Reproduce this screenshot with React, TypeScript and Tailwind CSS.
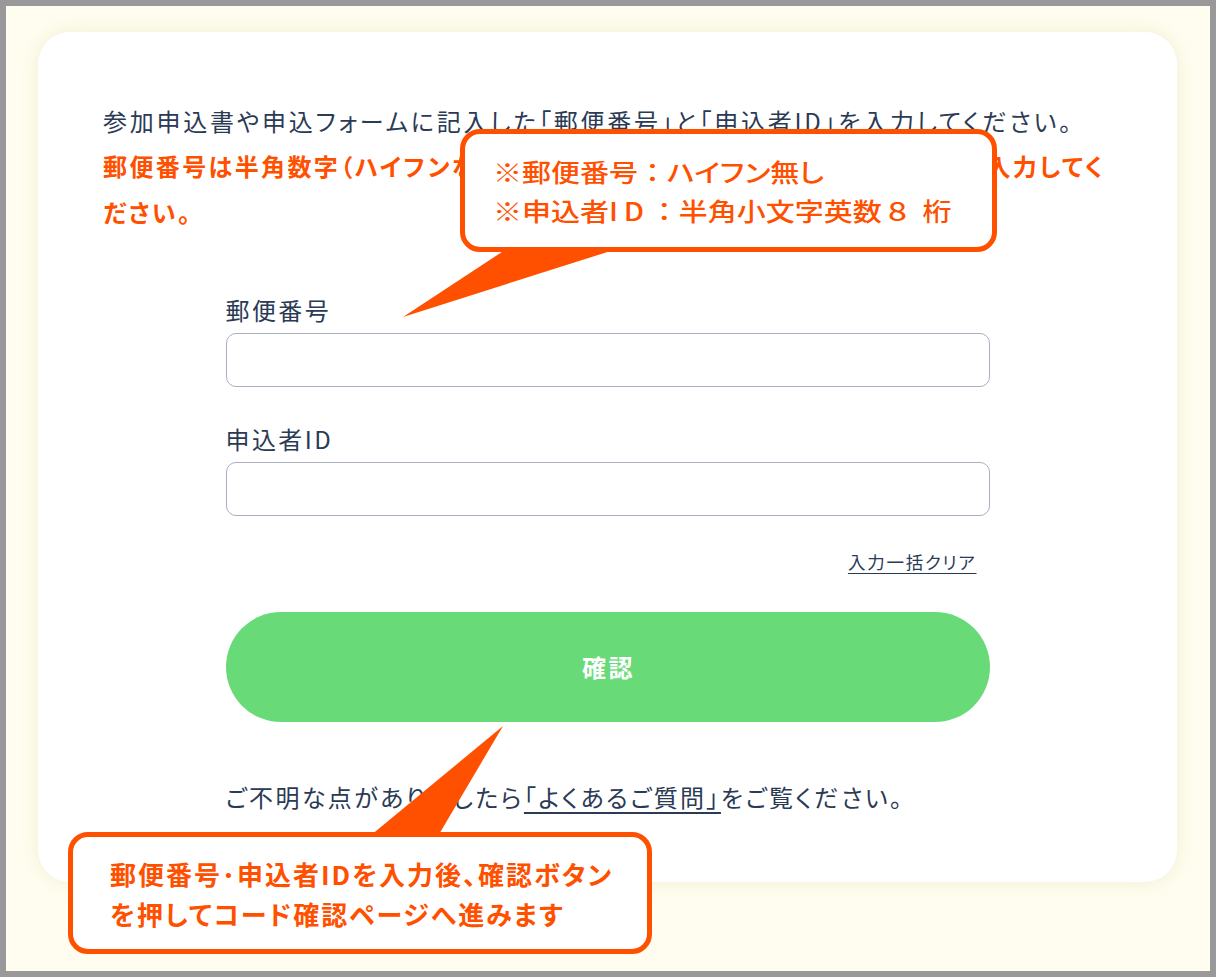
import React from "react";

const font = { fontFamily: '"Noto Sans CJK JP", "Noto Sans", sans-serif' };

const Colon = () => <span className="[font-feature-settings:normal]">：</span>;

export default function App() {
    return (
        <div className="relative w-[1216px] h-[977px] bg-[#999999] p-[6px]" style={font}>
            <div className="w-full h-full bg-[#fffdef] pt-[26px] pl-[32px]">
                <div className="w-[1139px] bg-white rounded-[32px] shadow-[0_0_18px_rgba(190,180,120,0.22)] px-[65px] pt-[66px] pb-[68px] text-[#2b3a55] [font-feature-settings:'palt']">
                    <p className="text-[24px] leading-[45px] tracking-[0.115em] whitespace-nowrap">
                        参加申込書や申込フォームに記入した「郵便番号」と「申込者ID」を入力してください。
                    </p>
                    <p className="text-[24px] leading-[46px] tracking-[0.1em] font-bold text-[#ff5000]">
                        <span className="block whitespace-nowrap">
                            郵便番号は半角数字（ハイフンなし）7桁、申込者IDは半角小文字英数字8桁で入力してく
                        </span>
                        <span className="block">ださい。</span>
                    </p>

                    <form className="w-[764px] mx-auto mt-[58px]">
                        <label className="block text-[24px] leading-[34px] tracking-[0.1em] mb-[6px]">郵便番号</label>
                        <input className="block w-full h-[54px] rounded-[10px] border border-[#a9b0bf] bg-white px-4 outline-none" />

                        <label className="block text-[24px] leading-[34px] tracking-[0.1em] mt-[35px] mb-[6px]">申込者ID</label>
                        <input className="block w-full h-[54px] rounded-[10px] border border-[#a9b0bf] bg-white px-4 outline-none" />

                        <div className="flex justify-end pr-[13px] mt-[34px]">
                            <a className="text-[17.5px] leading-[24px] tracking-[0.1em] underline underline-offset-[4px] cursor-pointer">
                                入力一括クリア
                            </a>
                        </div>

                        <button
                            type="button"
                            className="block w-full h-[110px] mt-[38px] rounded-full bg-[#68db78] text-white text-[24px] font-bold tracking-[0.1em] pl-[2px]"
                        >
                            確認
                        </button>

                        <p className="mt-[58px] text-[24px] leading-[34px] tracking-[0.1em] whitespace-nowrap">
                            ご不明な点がありましたら
                            <a className="underline underline-offset-[5px] decoration-2 cursor-pointer">「よくあるご質問」</a>
                            をご覧ください。
                        </p>
                    </form>
                </div>
            </div>

            {/* 吹き出しのしっぽ */}
            <svg className="absolute left-0 top-0 pointer-events-none" width="1216" height="977">
                <polygon points="508,248 620,248 403,317" fill="#ff5000" />
                <polygon points="370,836 438,836 503,726" fill="#ff5000" />
            </svg>

            <div className="absolute left-[460px] top-[129px] w-[537px] h-[123px] pl-[28px] pt-[18px] bg-white border-[5px] border-[#ff5000] rounded-[20px] text-[#ff5000]">
                <div className="origin-left scale-x-[1.16] whitespace-nowrap text-[25px] leading-[39px] font-medium [font-feature-settings:'palt']">
                    ※郵便番号<Colon />ハイフン無し
                </div>
                <div className="origin-left scale-x-[1.16] whitespace-nowrap text-[25px] leading-[39px] font-medium [font-feature-settings:'palt']">
                    ※申込者<span className="tracking-[5px]">ID</span><Colon />半角小文字英数<span className="ml-[4px] mr-[12px]">８</span>桁
                </div>
            </div>

            <div className="absolute left-[68px] top-[832px] w-[584px] h-[122px] pl-[37px] pt-[17px] bg-white border-[5px] border-[#ff5000] rounded-[20px] text-[#ff5000] [font-feature-settings:'palt']">
                <div className="whitespace-nowrap text-[26px] leading-[40px] tracking-[2px] font-bold">
                    郵便番号･申込者IDを入力後、確認ボタン
                </div>
                <div className="whitespace-nowrap text-[26px] leading-[40px] tracking-[2px] font-bold">
                    を押してコード確認ページへ進みます
                </div>
            </div>
        </div>
    );
}
